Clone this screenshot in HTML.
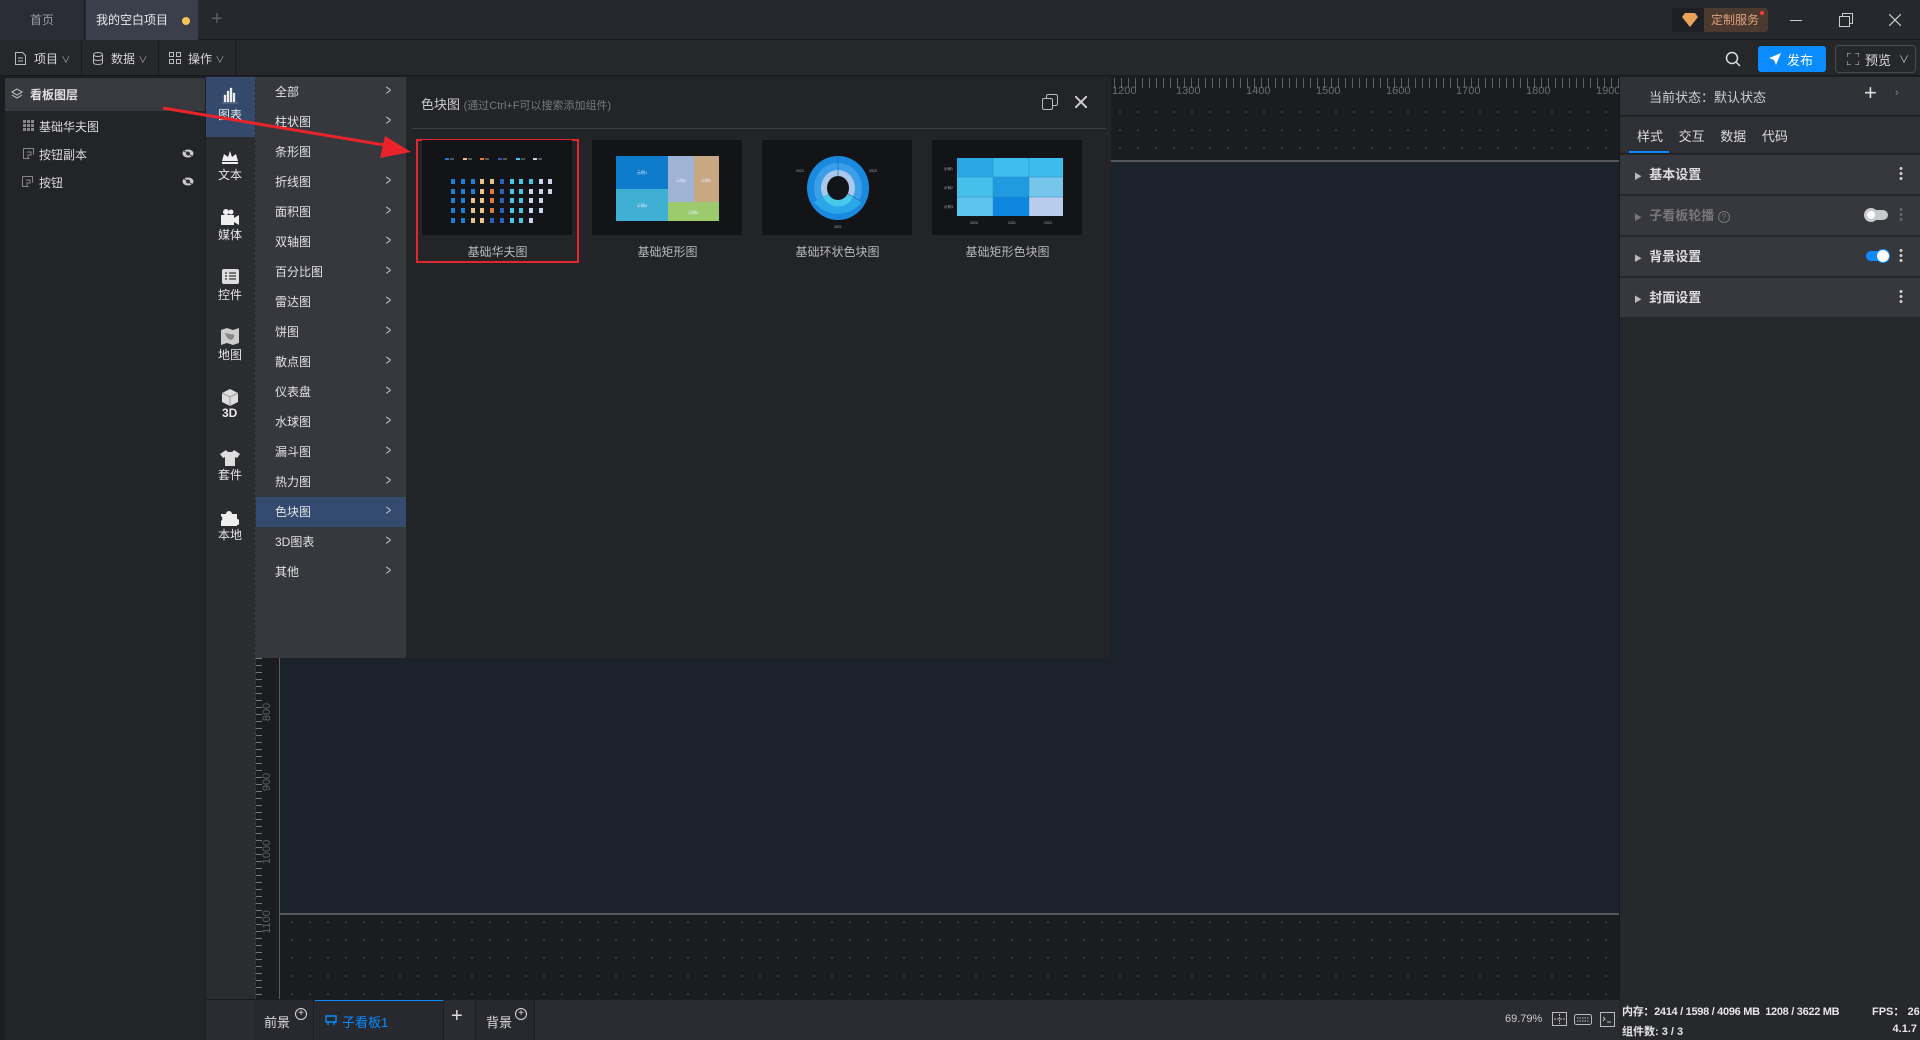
<!DOCTYPE html>
<html><head><meta charset="utf-8"><style>
*{box-sizing:border-box;margin:0;padding:0}
body{width:1920px;height:1040px;overflow:hidden;background:#1f2023;font-family:"Liberation Sans","Noto Sans CJK SC",sans-serif;font-size:12px;color:#d4d4d6;position:relative}
.a{position:absolute}
.t{white-space:nowrap}
</style></head><body>
<!-- title bar -->
<div class="a" style="left:0;top:0;width:1920px;height:40px;background:#26282e;border-bottom:1px solid #18191b"></div>
<div class="a t" style="left:0;top:0;width:85px;height:40px;background:#2a2d35;color:#9a9ca2;text-align:center;line-height:40px;border-right:1px solid #1c1d20">首页</div>
<div class="a t" style="left:86px;top:0;width:112px;height:40px;background:#3b3f4c;color:#e8e8ea;line-height:40px;padding-left:10px">我的空白项目</div>
<div class="a" style="left:182px;top:17px;width:8px;height:8px;border-radius:50%;background:#f5c35b"></div>
<div class="a t" style="left:211px;top:8px;color:#5a5c62;font-size:20px;line-height:22px">+</div>
<div class="a" style="left:1672px;top:8px;width:96px;height:24px;background:#1e2026;border-radius:3px"></div>
<div class="a" style="left:1704px;top:8px;width:64px;height:24px;background:#4a3a30;border-radius:0 3px 3px 0"></div>
<svg class="a" style="left:1682px;top:13px" width="16" height="14"><path d="M3 0h10l3 4-8 10-8-10z" fill="#e9a25a"/></svg>
<div class="a t" style="left:1711px;top:11px;color:#e0a07a;font-size:12px">定制服务</div>
<div class="a" style="left:1760px;top:11px;width:4px;height:4px;border-radius:50%;background:#ff3b3b"></div>
<div class="a" style="left:1790px;top:20px;width:12px;height:1px;background:#ccc"></div>
<svg class="a" style="left:1839px;top:13px" width="14" height="14"><rect x="0.5" y="3.5" width="10" height="10" fill="none" stroke="#ccc"/><path d="M3.5 3.5V0.5h10v10h-3" fill="none" stroke="#ccc"/></svg>
<svg class="a" style="left:1889px;top:14px" width="12" height="12"><path d="M0 0L12 12M12 0L0 12" stroke="#ccc" stroke-width="1.2"/></svg>
<!-- toolbar -->
<div class="a" style="left:0;top:40px;width:1920px;height:36px;background:#26272b;border-bottom:1px solid #18191b"></div>
<div class="a" style="left:0;top:41px;width:82px;height:35px;border-right:1px solid #1a1b1e"></div>
<div class="a" style="left:82px;top:41px;width:77px;height:35px;border-right:1px solid #1a1b1e"></div>
<div class="a" style="left:159px;top:41px;width:77px;height:35px;border-right:1px solid #1a1b1e"></div>
<svg class="a" style="left:15px;top:52px" width="11" height="13"><path d="M.5.5h7l3 3v9h-10z M3 6h5M3 9h5" fill="none" stroke="#bbb"/></svg>
<div class="a t" style="left:34px;top:50px;color:#d8d8da">项目 <span style="font-size:9px;color:#aaa">∨</span></div>
<svg class="a" style="left:93px;top:52px" width="10" height="13"><ellipse cx="5" cy="2.5" rx="4.5" ry="2" fill="none" stroke="#bbb"/><path d="M.5 2.5v8c0 2.6 9 2.6 9 0v-8M.5 6.5c0 2.6 9 2.6 9 0" fill="none" stroke="#bbb"/></svg>
<div class="a t" style="left:111px;top:50px;color:#d8d8da">数据 <span style="font-size:9px;color:#aaa">∨</span></div>
<svg class="a" style="left:169px;top:52px" width="12" height="12"><path d="M.5.5h4v4h-4zM7.5.5h4v4h-4zM.5 7.5h4v4h-4zM7.5 7.5h4v4h-4z" fill="none" stroke="#bbb"/></svg>
<div class="a t" style="left:188px;top:50px;color:#d8d8da">操作 <span style="font-size:9px;color:#aaa">∨</span></div>
<svg class="a" style="left:1725px;top:51px" width="16" height="16"><circle cx="7" cy="7" r="5.5" fill="none" stroke="#ddd" stroke-width="1.5"/><path d="M11 11l4 4" stroke="#ddd" stroke-width="1.5"/></svg>
<div class="a" style="left:1758px;top:46px;width:68px;height:26px;background:#0a8cff;border-radius:3px"></div>
<svg class="a" style="left:1769px;top:53px" width="12" height="12"><path d="M12 0L0 5l5 2 2 5z" fill="#fff"/></svg>
<div class="a t" style="left:1787px;top:50px;color:#fff;font-size:13px">发布</div>
<div class="a" style="left:1835px;top:45px;width:81px;height:28px;border:1px solid #4a4b50;border-radius:4px"></div>
<svg class="a" style="left:1847px;top:53px" width="12" height="12"><path d="M0 4V0h4M8 0h4v4M12 8v4H8M4 12H0V8" fill="none" stroke="#ccc"/></svg>
<div class="a t" style="left:1865px;top:50px;color:#ddd;font-size:13px">预览</div>
<div class="a t" style="left:1899px;top:51px;color:#ccc;font-size:10px">∨</div>
<!-- left panel -->
<div class="a" style="left:0;top:77px;width:206px;height:963px;background:#1c1d20"></div>
<div class="a" style="left:5px;top:78px;width:200px;height:962px;background:#232427"></div>
<div class="a" style="left:5px;top:78px;width:200px;height:33px;background:#38393e"></div>
<svg class="a" style="left:11px;top:88px" width="12" height="12"><path d="M6 1l5 3-5 3-5-3z M1 7l5 3 5-3" fill="none" stroke="#ccc"/></svg>
<div class="a t" style="left:30px;top:86px;color:#e0e0e2;font-weight:bold">看板图层</div>
<svg class="a" style="left:23px;top:120px" width="11" height="11"><path d="M0 0h3v3H0zM4 0h3v3H4zM8 0h3v3H8zM0 4h3v3H0zM4 4h3v3H4zM8 4h3v3H8zM0 8h3v3H0zM4 8h3v3H4zM8 8h3v3H8z" fill="#888"/></svg>
<div class="a t" style="left:39px;top:118px;color:#ddd">基础华夫图</div>
<svg class="a" style="left:23px;top:148px" width="11" height="11"><path d="M.5 .5h10v6M.5.5v10h6M4 4h4v3H5v3" fill="none" stroke="#888"/></svg>
<div class="a t" style="left:39px;top:146px;color:#ddd">按钮副本</div>
<svg class="a" style="left:22px;top:176px" width="11" height="11"><path d="M.5 .5h10v6M.5.5v10h6M4 4h4v3H5v3" fill="none" stroke="#888"/></svg>
<div class="a t" style="left:39px;top:174px;color:#ddd">按钮</div>
<svg class="a" style="left:182px;top:149px" width="12" height="9"><ellipse cx="6" cy="4.5" rx="5.5" ry="4" fill="#ccc"/><circle cx="6" cy="4.5" r="2" fill="#333"/><path d="M1 1l10 7" stroke="#333"/></svg>
<svg class="a" style="left:182px;top:177px" width="12" height="9"><ellipse cx="6" cy="4.5" rx="5.5" ry="4" fill="#ccc"/><circle cx="6" cy="4.5" r="2" fill="#333"/><path d="M1 1l10 7" stroke="#333"/></svg>
<!-- icon sidebar -->
<div class="a" style="left:206px;top:77px;width:50px;height:963px;background:#2b2c30;border-right:1px dashed #3a3b40"></div>
<div class="a" style="left:206px;top:77px;width:49px;height:60px;background:#34496b"></div>
<svg class="a" style="left:221px;top:87px" width="18" height="17"><path d="M1 16h16M3 8h2v7H3zM6 4h2v11H6zM9 1h2v14H9zM12 6h2v9h-2z" fill="#eee" stroke="#eee" stroke-width=".3"/></svg>
<div class="a t" style="left:218px;top:106px;color:#e6e6e6">图表</div>
<svg class="a" style="left:221px;top:150px" width="18" height="14"><path d="M1 11L3 4l4 3 2-6 2 6 4-3 2 7z" fill="#eee"/><rect x="1" y="12" width="16" height="2" fill="#eee"/></svg>
<div class="a t" style="left:218px;top:166px;color:#e6e6e6">文本</div>
<svg class="a" style="left:221px;top:209px" width="18" height="16"><path d="M0 6h13v10H0z M13 9l5-3v10l-5-3" fill="#eee"/><circle cx="5" cy="3" r="3" fill="#eee"/><circle cx="10" cy="3" r="2.5" fill="#eee"/></svg>
<div class="a t" style="left:218px;top:226px;color:#e6e6e6">媒体</div>
<svg class="a" style="left:222px;top:269px" width="17" height="15"><rect width="17" height="15" rx="2" fill="#ddd"/><path d="M3 4h2M3 7h2M3 10h2M7 4h7M7 7h7M7 10h7" stroke="#555" stroke-width="1.5"/></svg>
<div class="a t" style="left:218px;top:286px;color:#e6e6e6">控件</div>
<svg class="a" style="left:221px;top:328px" width="18" height="17"><path d="M0 2l6-2 6 2 6-2v15l-6 2-6-2-6 2z" fill="#ccc"/><path d="M4 5c3 0 5 2 8 1 2 2 1 5-2 6-3-1-5-3-6-7" fill="#888"/></svg>
<div class="a t" style="left:218px;top:346px;color:#e6e6e6">地图</div>
<svg class="a" style="left:222px;top:389px" width="16" height="17"><path d="M8 0l8 4v9l-8 4-8-4V4z" fill="#ddd"/><path d="M0 4l8 4 8-4M8 8v9" stroke="#999" fill="none"/></svg>
<div class="a t" style="left:222px;top:406px;color:#e6e6e6;font-weight:bold">3D</div>
<svg class="a" style="left:220px;top:450px" width="20" height="16"><path d="M6 0L0 4l3 4 2-1v9h10V7l2 1 3-4-6-4c-1 2-3 2-4 2S7 2 6 0z" fill="#ddd"/></svg>
<div class="a t" style="left:218px;top:466px;color:#e6e6e6">套件</div>
<svg class="a" style="left:221px;top:510px" width="18" height="16"><path d="M0 4h5a3 3 0 016 0h5v5a3 3 0 010 6v1H0v-5a3 3 0 000-5z" fill="#eee"/></svg>
<div class="a t" style="left:218px;top:526px;color:#e6e6e6">本地</div>
<!-- main canvas area -->
<div class="a" style="left:256px;top:77px;width:1363px;height:923px;background:#1b1c1e"></div>
<div class="a" style="left:280px;top:100px;width:1339px;height:900px;background-image:radial-gradient(circle,#3a3b3e 0.9px,transparent 1.2px);background-size:18px 18px;background-position:3px 3px"></div>
<div class="a" style="left:256px;top:78px;width:1363px;height:10px;background:repeating-linear-gradient(90deg,#8a8b8f 0 1px,transparent 1px 7px);background-position:4px 0;opacity:.6"></div>
<div class="a t" style="left:1100px;top:85px;width:519px;height:14px;color:#6c6d71;font-size:11px">
<span class="a" style="left:12px">1200</span><span class="a" style="left:76px">1300</span><span class="a" style="left:146px">1400</span><span class="a" style="left:216px">1500</span><span class="a" style="left:286px">1600</span><span class="a" style="left:356px">1700</span><span class="a" style="left:426px">1800</span><span class="a" style="left:496px">1900</span></div>
<div class="a" style="left:280px;top:160px;width:1339px;height:755px;background:#1c222b;border-top:2px solid #55575c;border-bottom:2px solid #55575c"></div>
<div class="a" style="left:256px;top:77px;width:24px;height:923px;background:#1b1c1e;border-right:1px solid #5a5b5f"></div>
<div class="a" style="left:256px;top:77px;width:6px;height:923px;background:repeating-linear-gradient(180deg,#77787c 0 1px,transparent 1px 7px)"></div>
<div class="a t" style="left:258px;top:706px;color:#606165;font-size:11px;transform:rotate(-90deg)">800</div>
<div class="a t" style="left:258px;top:776px;color:#606165;font-size:11px;transform:rotate(-90deg)">900</div>
<div class="a t" style="left:255px;top:846px;color:#606165;font-size:11px;transform:rotate(-90deg)">1000</div>
<div class="a t" style="left:255px;top:916px;color:#606165;font-size:11px;transform:rotate(-90deg)">1100</div>
<!-- category menu -->
<div class="a" style="left:256px;top:77px;width:150px;height:581px;background:#37383e"></div>
<div class="a" style="left:256px;top:497px;width:150px;height:30px;background:#344a6e"></div>
<div class="a" style="left:275px;top:77px;width:130px;color:#e2e2e4;font-size:12px;line-height:30px">
<div>全部</div><div>柱状图</div><div>条形图</div><div>折线图</div><div>面积图</div><div>双轴图</div><div>百分比图</div><div>雷达图</div><div>饼图</div><div>散点图</div><div>仪表盘</div><div>水球图</div><div>漏斗图</div><div>热力图</div><div>色块图</div><div>3D图表</div><div>其他</div></div>
<div class="a" style="left:384px;top:76px;color:#ccc;font-size:15px;line-height:30px;transform:scaleX(.6)">
<div>&gt;</div><div>&gt;</div><div>&gt;</div><div>&gt;</div><div>&gt;</div><div>&gt;</div><div>&gt;</div><div>&gt;</div><div>&gt;</div><div>&gt;</div><div>&gt;</div><div>&gt;</div><div>&gt;</div><div>&gt;</div><div>&gt;</div><div>&gt;</div><div>&gt;</div></div>
<!-- popup -->
<div class="a" style="left:406px;top:77px;width:705px;height:581px;background:#232428"></div>
<div class="a t" style="left:421px;top:94px;color:#cfcfd2;font-size:13px">色块图 <span style="font-size:11px;color:#77787c">(通过Ctrl+F可以搜索添加组件)</span></div>
<div class="a" style="left:412px;top:128px;width:694px;height:1px;background:#3d3e42"></div>
<svg class="a" style="left:1042px;top:94px" width="16" height="16"><rect x=".5" y="4.5" width="10" height="11" rx="1.5" fill="none" stroke="#bbb"/><path d="M4.5 4V2a1.5 1.5 0 011.5-1.5h8A1.5 1.5 0 0115.5 2v8a1.5 1.5 0 01-1.5 1.5h-3" fill="none" stroke="#bbb"/></svg>
<svg class="a" style="left:1075px;top:96px" width="12" height="12"><path d="M0 0L12 12M12 0L0 12" stroke="#ccc" stroke-width="2"/></svg>
<!-- cards -->
<div class="a" style="left:416px;top:139px;width:163px;height:124px;border:2px solid #e1272b"></div>
<svg class="a" style="left:422px;top:140px" width="150" height="95"><rect width="150" height="95" fill="#131418"/>
<g><rect x="23" y="18" width="4" height="2" fill="#1a7fd8"/><rect x="28" y="18" width="4" height="2" fill="#555"/><rect x="41" y="18" width="4" height="2" fill="#e8c48a"/><rect x="46" y="18" width="4" height="2" fill="#555"/><rect x="58" y="18" width="4" height="2" fill="#e07a3a"/><rect x="63" y="18" width="4" height="2" fill="#555"/><rect x="76" y="18" width="4" height="2" fill="#2a5fc0"/><rect x="81" y="18" width="4" height="2" fill="#555"/><rect x="94" y="18" width="4" height="2" fill="#48c6e8"/><rect x="99" y="18" width="4" height="2" fill="#555"/><rect x="111" y="18" width="4" height="2" fill="#c8d4ec"/><rect x="116" y="18" width="4" height="2" fill="#555"/></g>
<g>
<g fill="#1a7fd8"><rect x="29" y="39" width="4" height="5"/><rect x="39" y="39" width="4" height="5"/><rect x="49" y="39" width="4" height="5"/><rect x="29" y="49" width="4" height="5"/><rect x="39" y="49" width="4" height="5"/><rect x="49" y="49" width="4" height="5"/><rect x="29" y="58" width="4" height="5"/><rect x="39" y="58" width="4" height="5"/><rect x="29" y="68" width="4" height="5"/><rect x="39" y="68" width="4" height="5"/><rect x="29" y="78" width="4" height="5"/><rect x="39" y="78" width="4" height="5"/></g>
<g fill="#e8c48a"><rect x="58" y="39" width="4" height="5"/><rect x="68" y="39" width="4" height="5"/><rect x="58" y="49" width="4" height="5"/><rect x="49" y="58" width="4" height="5"/><rect x="58" y="58" width="4" height="5"/><rect x="49" y="68" width="4" height="5"/><rect x="58" y="68" width="4" height="5"/><rect x="49" y="78" width="4" height="5"/><rect x="58" y="78" width="4" height="5"/></g>
<g fill="#e07a3a"><rect x="68" y="49" width="4" height="5"/><rect x="68" y="58" width="4" height="5"/><rect x="68" y="68" width="4" height="5"/></g>
<g fill="#2a5fc0"><rect x="78" y="39" width="4" height="5"/><rect x="78" y="49" width="4" height="5"/><rect x="78" y="58" width="4" height="5"/><rect x="78" y="68" width="4" height="5"/><rect x="68" y="78" width="4" height="5"/><rect x="78" y="78" width="4" height="5"/></g>
<g fill="#48c6e8"><rect x="88" y="39" width="4" height="5"/><rect x="97" y="39" width="4" height="5"/><rect x="107" y="39" width="4" height="5"/><rect x="88" y="49" width="4" height="5"/><rect x="97" y="49" width="4" height="5"/><rect x="88" y="58" width="4" height="5"/><rect x="97" y="58" width="4" height="5"/><rect x="88" y="68" width="4" height="5"/><rect x="97" y="68" width="4" height="5"/><rect x="88" y="78" width="4" height="5"/><rect x="97" y="78" width="4" height="5"/></g>
<g fill="#c8d4ec"><rect x="117" y="39" width="4" height="5"/><rect x="126" y="39" width="4" height="5"/><rect x="107" y="49" width="4" height="5"/><rect x="117" y="49" width="4" height="5"/><rect x="126" y="49" width="4" height="5"/><rect x="107" y="58" width="4" height="5"/><rect x="117" y="58" width="4" height="5"/><rect x="107" y="68" width="4" height="5"/><rect x="117" y="68" width="4" height="5"/><rect x="107" y="78" width="4" height="5"/></g>
</g></svg>
<div class="a t" style="left:416px;top:243px;width:163px;text-align:center;color:#b8b9bc">基础华夫图</div>
<svg class="a" style="left:592px;top:140px" width="150" height="95"><rect width="150" height="95" fill="#131418"/>
<rect x="24" y="16" width="52" height="33" fill="#0e7bcb"/><rect x="24" y="49" width="52" height="32" fill="#40afd4"/><rect x="76" y="16" width="26" height="46" fill="#9fb4d4"/><rect x="102" y="16" width="25" height="46" fill="#c8a882"/><rect x="76" y="62" width="51" height="19" fill="#9bcb6c"/>
<g font-size="4" fill="#eef"><text x="45" y="34">示例1</text><text x="84" y="42">示例2</text><text x="109" y="42">示例3</text><text x="45" y="67">示例4</text><text x="96" y="74">示例5</text></g></svg>
<div class="a t" style="left:586px;top:243px;width:163px;text-align:center;color:#b8b9bc">基础矩形图</div>
<svg class="a" style="left:762px;top:140px" width="150" height="95"><rect width="150" height="95" fill="#131418"/>
<ellipse cx="76" cy="48" rx="31" ry="32" fill="#1a8ae0"/><ellipse cx="76" cy="48" rx="24" ry="25" fill="#3b9ee8"/><ellipse cx="76" cy="48" rx="17" ry="18" fill="#a8c8ec"/>
<path d="M76 48L52 62A31 32 0 0 0 100 62z" fill="#2aa7e8"/><path d="M76 48L61 57A17 18 0 0 0 91 57z" fill="#48c8ec"/>
<path d="M76 16V48L100 62" stroke="#1466a8" stroke-width=".6" fill="none"/>
<ellipse cx="76" cy="48" rx="11" ry="12" fill="#131418"/>
<g font-size="3.5" fill="#aab"><text x="34" y="32">2022</text><text x="107" y="32">2020</text><text x="72" y="88">2021</text></g></svg>
<div class="a t" style="left:756px;top:243px;width:163px;text-align:center;color:#b8b9bc">基础环状色块图</div>
<svg class="a" style="left:932px;top:140px" width="150" height="95"><rect width="150" height="95" fill="#131418"/>
<rect x="25" y="18" width="36" height="19" fill="#2aa8e6"/><rect x="61" y="18" width="36" height="19" fill="#3ebcec"/><rect x="97" y="18" width="34" height="19" fill="#3cbcec"/>
<rect x="25" y="37" width="36" height="20" fill="#44c0ea"/><rect x="61" y="37" width="36" height="20" fill="#209ae0"/><rect x="97" y="37" width="34" height="20" fill="#76c6ec"/>
<rect x="25" y="57" width="36" height="19" fill="#5cc4ee"/><rect x="61" y="57" width="36" height="19" fill="#0e86e0"/><rect x="97" y="57" width="34" height="19" fill="#b8ccec"/>
<g stroke="#2a88c0" stroke-width=".5" fill="none"><path d="M25 37h106M25 57h106M61 18v58M97 18v58"/></g>
<g font-size="3.5" fill="#aab"><text x="12" y="30">示例1</text><text x="12" y="49">示例2</text><text x="12" y="68">示例3</text><text x="38" y="84">2020</text><text x="76" y="84">2021</text><text x="112" y="84">2022</text></g></svg>
<div class="a t" style="left:926px;top:243px;width:163px;text-align:center;color:#b8b9bc">基础矩形色块图</div>
<!-- red arrow -->
<svg class="a" style="left:0;top:0" width="500" height="200"><path d="M163 108L390 146" stroke="#e8232a" stroke-width="3"/><path d="M411 152L385 136L380 158z" fill="#e8232a"/></svg>
<!-- right panel -->
<div class="a" style="left:1619px;top:77px;width:301px;height:922px;background:#27282c;border-left:1px solid #18191b"></div>
<div class="a" style="left:1620px;top:77px;width:300px;height:39px;background:#313237;border-bottom:1px solid #1e1f22"></div>
<div class="a t" style="left:1649px;top:87px;color:#cfd0d3;font-size:13px">当前状态：默认状态</div>
<div class="a t" style="left:1864px;top:80px;color:#ddd;font-size:22px;font-weight:300">+</div>
<div class="a t" style="left:1895px;top:87px;color:#888;font-size:11px">›</div>
<div class="a" style="left:1620px;top:117px;width:300px;height:37px;background:#2f3035;border-bottom:1px solid #1e1f22"></div>
<div class="a t" style="left:1637px;top:126px;color:#ddd;font-size:13px;word-spacing:12px">样式 交互 数据 代码</div>
<div class="a" style="left:1629px;top:151px;width:40px;height:2px;background:#0a8cff"></div>
<div class="a" style="left:1620px;top:155px;width:300px;height:40px;background:#37383d;border-bottom:1px solid #26272a"></div>
<div class="a" style="left:1620px;top:196px;width:300px;height:40px;background:#37383d;border-bottom:1px solid #26272a"></div>
<div class="a" style="left:1620px;top:237px;width:300px;height:40px;background:#37383d;border-bottom:1px solid #26272a"></div>
<div class="a" style="left:1620px;top:278px;width:300px;height:39px;background:#37383d"></div>
<div class="a t" style="left:1634px;top:164px;color:#ddd;font-size:13px;font-weight:bold"><span style="font-size:8px;color:#bbb">▶</span>&nbsp; 基本设置</div>
<div class="a t" style="left:1634px;top:205px;color:#777;font-size:13px;font-weight:bold"><span style="font-size:8px">▶</span>&nbsp; 子看板轮播 <span style="display:inline-block;width:12px;height:12px;border:1px solid #777;border-radius:50%;font-size:9px;line-height:10px;text-align:center;font-weight:normal">?</span></div>
<div class="a t" style="left:1634px;top:246px;color:#ddd;font-size:13px;font-weight:bold"><span style="font-size:8px;color:#bbb">▶</span>&nbsp; 背景设置</div>
<div class="a t" style="left:1634px;top:287px;color:#ddd;font-size:13px;font-weight:bold"><span style="font-size:8px;color:#bbb">▶</span>&nbsp; 封面设置</div>
<div class="a" style="left:1866px;top:210px;width:22px;height:10px;border-radius:5px;background:#c8c9cc"></div>
<div class="a" style="left:1864px;top:208px;width:14px;height:14px;border-radius:50%;background:#fff;border:3px solid #c8c9cc"></div>
<div class="a" style="left:1866px;top:251px;width:22px;height:10px;border-radius:5px;background:#0a8cff"></div>
<div class="a" style="left:1876px;top:249px;width:14px;height:14px;border-radius:50%;background:#fff;border:1px solid #0a8cff"></div>
<div class="a" style="left:1899px;top:166px;width:4px;height:14px;background:radial-gradient(circle,#ccc 1.4px,transparent 1.6px);background-size:4px 5px"></div>
<div class="a" style="left:1899px;top:207px;width:4px;height:14px;background:radial-gradient(circle,#666 1.4px,transparent 1.6px);background-size:4px 5px"></div>
<div class="a" style="left:1899px;top:248px;width:4px;height:14px;background:radial-gradient(circle,#ccc 1.4px,transparent 1.6px);background-size:4px 5px"></div>
<div class="a" style="left:1899px;top:289px;width:4px;height:14px;background:radial-gradient(circle,#ccc 1.4px,transparent 1.6px);background-size:4px 5px"></div>
<!-- bottom bar -->
<div class="a" style="left:206px;top:999px;width:1414px;height:41px;background:#2b2c31;border-top:1px solid #1b1c1e"></div>
<div class="a" style="left:255px;top:1000px;width:59px;height:40px;background:#28292e;border-right:1px solid #1d1e21"></div>
<div class="a t" style="left:264px;top:1012px;color:#ddd;font-size:13px">前景</div>
<div class="a" style="left:295px;top:1008px;width:12px;height:12px;border:1px solid #ddd;border-radius:50%;color:#ddd;font-size:10px;line-height:10px;text-align:center">+</div>
<div class="a" style="left:315px;top:1000px;width:129px;height:40px;background:#28292e;border-top:1px solid #0a8cff;border-right:1px solid #1d1e21"></div>
<svg class="a" style="left:325px;top:1015px" width="12" height="11"><path d="M1 1h10v6H1zM3 7v3M9 7v3" fill="none" stroke="#0a8cff" stroke-width="1.4"/></svg>
<div class="a t" style="left:342px;top:1012px;color:#0a8cff;font-size:13px">子看板1</div>
<div class="a t" style="left:451px;top:1005px;color:#ddd;font-size:20px">+</div>
<div class="a" style="left:475px;top:1000px;width:60px;height:40px;background:#28292e;border-left:1px solid #1d1e21;border-right:1px solid #1d1e21"></div>
<div class="a t" style="left:486px;top:1012px;color:#ddd;font-size:13px">背景</div>
<div class="a" style="left:515px;top:1008px;width:12px;height:12px;border:1px solid #ddd;border-radius:50%;color:#ddd;font-size:10px;line-height:10px;text-align:center">+</div>
<div class="a t" style="left:1505px;top:1013px;color:#ccc;font-size:11px">69.79%</div>
<svg class="a" style="left:1552px;top:1012px" width="15" height="14"><rect x=".5" y=".5" width="14" height="13" fill="none" stroke="#bbb"/><path d="M7.5 2v10M2 7h11" stroke="#bbb" stroke-dasharray="2 1"/></svg>
<svg class="a" style="left:1574px;top:1014px" width="18" height="11"><rect x=".5" y=".5" width="17" height="10" rx="2" fill="none" stroke="#bbb"/><path d="M3 4h12M3 7h12" stroke="#bbb" stroke-dasharray="1.5 1"/></svg>
<svg class="a" style="left:1600px;top:1012px" width="15" height="15"><rect x=".5" y=".5" width="14" height="14" fill="none" stroke="#bbb"/><path d="M3 5l2 2-2 2M7 10h4" stroke="#bbb" fill="none"/></svg>
<div class="a" style="left:1619px;top:999px;width:301px;height:41px;background:#27282c"></div>
<div class="a t" style="left:1622px;top:1003px;color:#e6e6e6;font-size:11px;font-weight:bold;letter-spacing:-.3px">内存：2414 / 1598 / 4096 MB&nbsp; 1208 / 3622 MB</div>
<div class="a t" style="left:1872px;top:1003px;width:45px;text-align:right;color:#e6e6e6;font-size:11px;font-weight:bold">FPS： 26</div>
<div class="a t" style="left:1622px;top:1023px;color:#e6e6e6;font-size:11px;font-weight:bold">组件数: 3 / 3</div>
<div class="a t" style="left:1880px;top:1023px;width:37px;text-align:right;color:#e6e6e6;font-size:11px;font-weight:bold">4.1.7</div>
</body></html>
